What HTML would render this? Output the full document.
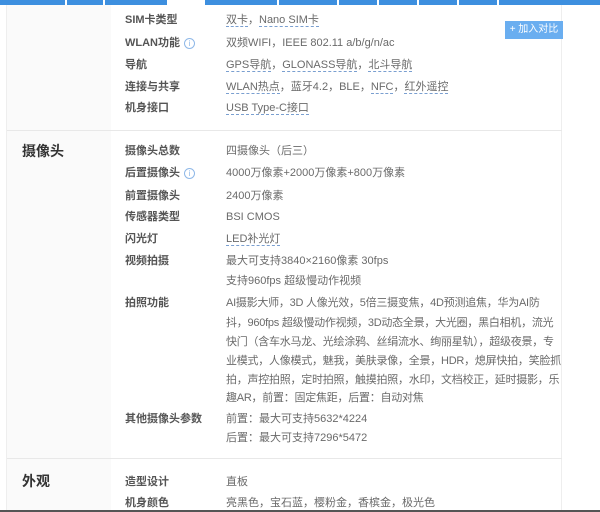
<!DOCTYPE html>
<html><head><meta charset="utf-8"><style>
body{margin:0;width:600px;height:512px;overflow:hidden;background:#fff;position:relative;font-family:"Liberation Sans","Noto Sans CJK SC",sans-serif;}
.bar{position:absolute;top:0;height:5px;background:#3d8fdf}
.t{position:absolute;font-size:11px;color:#6a6a6a;white-space:nowrap;line-height:14px}
.w{letter-spacing:-0.25px}
.l{position:absolute;left:125px;font-size:11px;color:#555;font-weight:bold;white-space:nowrap;line-height:14px}
.s{position:absolute;left:22px;font-size:14px;color:#333;font-weight:bold;line-height:16px}
.d{border-bottom:1px dashed #7a9fd0}
.hr{position:absolute;left:7px;width:555px;height:1px;background:#e8e8e8}
.i{display:inline-block;width:9px;height:9px;border:1px solid #8fb8e8;border-radius:50%;font-size:8px;line-height:9px;text-align:center;color:#8fb8e8;font-weight:normal;margin-left:4px;vertical-align:0}
</style></head><body>
<div class="bar" style="left:0;width:65px"></div>
<div class="bar" style="left:67px;width:36px"></div>
<div class="bar" style="left:105px;width:62px"></div>
<div class="bar" style="left:205px;width:72px"></div>
<div class="bar" style="left:279px;width:58px"></div>
<div class="bar" style="left:339px;width:38px"></div>
<div class="bar" style="left:379px;width:38px"></div>
<div class="bar" style="left:419px;width:38px"></div>
<div class="bar" style="left:459px;width:38px"></div>
<div class="bar" style="left:499px;width:101px"></div>
<div style="position:absolute;left:6px;top:5px;width:104px;height:507px;background:#fafafa;border-left:1px solid #eee"></div>
<div style="position:absolute;left:561px;top:5px;width:1px;height:507px;background:#eee"></div>
<div class="hr" style="top:130px"></div>
<div class="hr" style="top:458px"></div>
<div style="position:absolute;left:505px;top:21px;width:58px;height:18px;background:#6aaef0;color:#fff;font-size:10px;line-height:18px;text-align:center">+ 加入对比</div>

<div class="l" style="top:13px">SIM卡类型</div><div class="t" style="left:226px;top:13px"><span class="d">双卡</span>，<span class="d">Nano SIM卡</span></div>
<div class="l" style="top:36px">WLAN功能<span class="i">i</span></div><div class="t" style="left:226px;top:36px">双频WIFI，IEEE 802.11 a/b/g/n/ac</div>
<div class="l" style="top:58px">导航</div><div class="t" style="left:226px;top:58px"><span class="d">GPS导航</span>，<span class="d">GLONASS导航</span>，<span class="d">北斗导航</span></div>
<div class="l" style="top:80px">连接与共享</div><div class="t" style="left:226px;top:80px"><span class="d">WLAN热点</span>，蓝牙4.2，BLE，<span class="d">NFC</span>，<span class="d">红外遥控</span></div>
<div class="l" style="top:101px">机身接口</div><div class="t" style="left:226px;top:101px"><span class="d">USB Type-C接口</span></div>

<div class="s" style="top:143px">摄像头</div>
<div class="l" style="top:144px">摄像头总数</div><div class="t" style="left:226px;top:144px">四摄像头（后三）</div>
<div class="l" style="top:166px">后置摄像头<span class="i">i</span></div><div class="t" style="left:226px;top:166px">4000万像素+2000万像素+800万像素</div>
<div class="l" style="top:189px">前置摄像头</div><div class="t" style="left:226px;top:189px">2400万像素</div>
<div class="l" style="top:210px">传感器类型</div><div class="t" style="left:226px;top:210px">BSI CMOS</div>
<div class="l" style="top:232px">闪光灯</div><div class="t" style="left:226px;top:232px"><span class="d">LED补光灯</span></div>
<div class="l" style="top:254px">视频拍摄</div><div class="t" style="left:226px;top:254px">最大可支持3840×2160像素 30fps</div>
<div class="t" style="left:226px;top:274px">支持960fps 超级慢动作视频</div>
<div class="l" style="top:296px">拍照功能</div>
<div class="t w" style="left:226px;top:296px">AI摄影大师，3D 人像光效，5倍三摄变焦，4D预测追焦，华为AI防</div>
<div class="t w" style="left:226px;top:316px">抖，960fps 超级慢动作视频，3D动态全景，大光圈，黑白相机，流光</div>
<div class="t w" style="left:226px;top:335px">快门（含车水马龙、光绘涂鸦、丝绢流水、绚丽星轨），超级夜景，专</div>
<div class="t w" style="left:226px;top:354px">业模式，人像模式，魅我，美肤录像，全景，HDR，熄屏快拍，笑脸抓</div>
<div class="t w" style="left:226px;top:373px">拍，声控拍照，定时拍照，触摸拍照，水印，文档校正，延时摄影，乐</div>
<div class="t w" style="left:226px;top:391px">趣AR，前置：固定焦距，后置：自动对焦</div>
<div class="l" style="top:412px">其他摄像头参数</div><div class="t" style="left:226px;top:412px">前置：最大可支持5632*4224</div>
<div class="t" style="left:226px;top:431px">后置：最大可支持7296*5472</div>

<div class="s" style="top:473px">外观</div>
<div class="l" style="top:475px">造型设计</div><div class="t" style="left:226px;top:475px">直板</div>
<div class="l" style="top:496px">机身颜色</div><div class="t" style="left:226px;top:496px">亮黑色，宝石蓝，樱粉金，香槟金，极光色</div>
<div style="position:absolute;left:0;top:510px;width:600px;height:2px;background:#555"></div>
</body></html>
